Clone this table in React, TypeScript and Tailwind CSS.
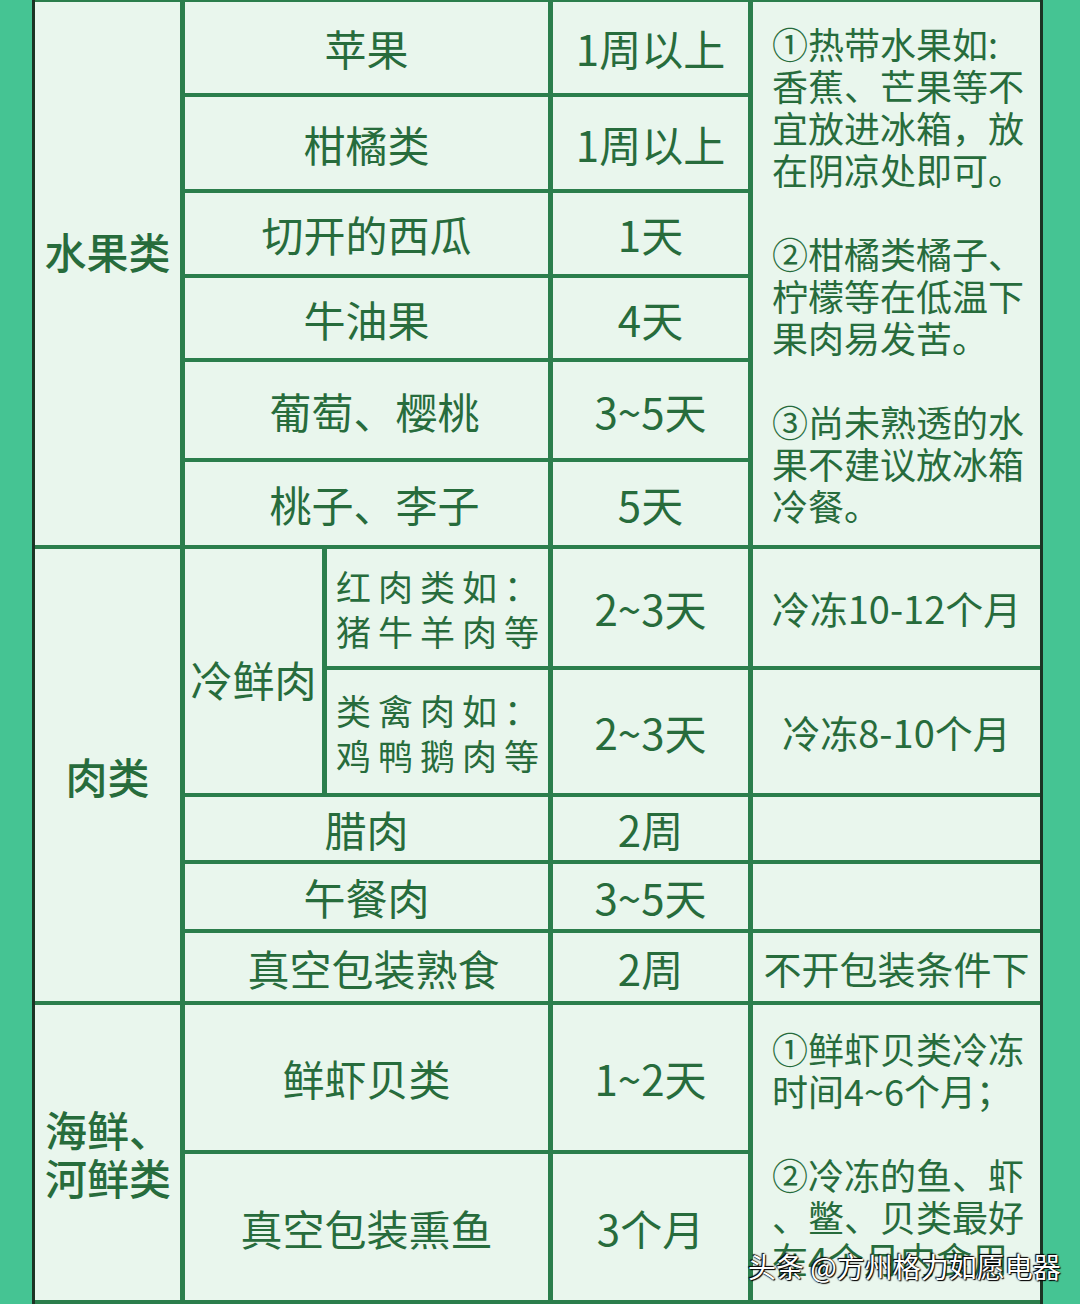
import React from "react";

const base =
  "bg-[#e9f6ed] flex items-center justify-center text-[#276c3c] font-['Noto_Sans_CJK_SC','Noto_Sans',sans-serif]";

function Cell({ className = "", children }: { className?: string; children?: React.ReactNode }) {
  return <div className={base + " " + className}>{children}</div>;
}

export default function App() {
  return (
    <div className="relative w-[1080px] h-[1304px] bg-[#45c493] overflow-hidden pl-[32px]">
      <div className="w-[1011px] border-x-[3px] border-[#1c3324] bg-[#2b7e4c] pt-[2px] pb-[4px]">
        <div className="grid grid-cols-[145px_137px_221px_195px_287px] grid-rows-[91px_92px_81px_80px_96px_83px_117px_123px_63px_65px_68px_145px_146px] gap-x-[5px] gap-y-[4px]">
          {/* Fruit section */}
          <Cell className="col-start-1 row-start-1 row-span-6 text-[42px] font-medium pb-[46px]">水果类</Cell>
          <Cell className="col-start-2 col-span-2 row-start-1 text-[42px]">苹果</Cell>
          <Cell className="col-start-4 row-start-1 text-[42px]">1周以上</Cell>
          <Cell className="col-start-5 row-start-1 row-span-6 !justify-start pl-[19px] text-[36px] leading-[42px]">
            <div>
              ①热带水果如:
              <br />
              香蕉、芒果等不
              <br />
              宜放进冰箱，放
              <br />
              在阴凉处即可。
              <br />
              <br />
              ②柑橘类橘子、
              <br />
              柠檬等在低温下
              <br />
              果肉易发苦。
              <br />
              <br />
              ③尚未熟透的水
              <br />
              果不建议放冰箱
              <br />
              冷餐。
            </div>
          </Cell>
          <Cell className="col-start-2 col-span-2 row-start-2 text-[42px]">柑橘类</Cell>
          <Cell className="col-start-4 row-start-2 text-[42px]">1周以上</Cell>
          <Cell className="col-start-2 col-span-2 row-start-3 text-[42px]">切开的西瓜</Cell>
          <Cell className="col-start-4 row-start-3 text-[42px]">1天</Cell>
          <Cell className="col-start-2 col-span-2 row-start-4 text-[42px]">牛油果</Cell>
          <Cell className="col-start-4 row-start-4 text-[42px]">4天</Cell>
          <Cell className="col-start-2 col-span-2 row-start-5 text-[42px] pl-[16px]">葡萄、樱桃</Cell>
          <Cell className="col-start-4 row-start-5 text-[42px]">3~5天</Cell>
          <Cell className="col-start-2 col-span-2 row-start-6 text-[42px] pl-[16px]">桃子、李子</Cell>
          <Cell className="col-start-4 row-start-6 text-[42px]">5天</Cell>

          {/* Meat section */}
          <Cell className="col-start-1 row-start-7 row-span-5 text-[42px] font-medium">肉类</Cell>
          <Cell className="col-start-2 row-start-7 row-span-2 text-[42px] pt-[14px]">冷鲜肉</Cell>
          <Cell className="col-start-3 row-start-7 !justify-start pl-[9px] text-[35px] leading-[45px] tracking-[7px]">
            <div>
              红肉类如：
              <br />
              猪牛羊肉等
            </div>
          </Cell>
          <Cell className="col-start-4 row-start-7 text-[42px]">2~3天</Cell>
          <Cell className="col-start-5 row-start-7 text-[38px]">冷冻10-12个月</Cell>
          <Cell className="col-start-3 row-start-8 !justify-start pl-[9px] text-[35px] leading-[45px] tracking-[7px]">
            <div>
              类禽肉如：
              <br />
              鸡鸭鹅肉等
            </div>
          </Cell>
          <Cell className="col-start-4 row-start-8 text-[42px]">2~3天</Cell>
          <Cell className="col-start-5 row-start-8 text-[38px]">冷冻8-10个月</Cell>
          <Cell className="col-start-2 col-span-2 row-start-9 text-[42px]">腊肉</Cell>
          <Cell className="col-start-4 row-start-9 text-[42px]">2周</Cell>
          <Cell className="col-start-5 row-start-9" />
          <Cell className="col-start-2 col-span-2 row-start-10 text-[42px]">午餐肉</Cell>
          <Cell className="col-start-4 row-start-10 text-[42px]">3~5天</Cell>
          <Cell className="col-start-5 row-start-10" />
          <Cell className="col-start-2 col-span-2 row-start-11 text-[42px] pl-[14px]">真空包装熟食</Cell>
          <Cell className="col-start-4 row-start-11 text-[42px]">2周</Cell>
          <Cell className="col-start-5 row-start-11 text-[38px]">不开包装条件下</Cell>

          {/* Seafood section */}
          <Cell className="col-start-1 row-start-12 row-span-2 text-[42px] font-medium leading-[48px] !justify-start pl-[10px]">
            <div>
              海鲜、
              <br />
              河鲜类
            </div>
          </Cell>
          <Cell className="col-start-2 col-span-2 row-start-12 text-[42px]">鲜虾贝类</Cell>
          <Cell className="col-start-4 row-start-12 text-[42px]">1~2天</Cell>
          <Cell className="col-start-5 row-start-12 row-span-2 !justify-start pl-[19px] text-[36px] leading-[42px]">
            <div>
              ①鲜虾贝类冷冻
              <br />
              时间4~6个月；
              <br />
              <br />
              ②冷冻的鱼、虾
              <br />
              、鳖、贝类最好
              <br />
              在4个月内食用
            </div>
          </Cell>
          <Cell className="col-start-2 col-span-2 row-start-13 text-[42px]">真空包装熏鱼</Cell>
          <Cell className="col-start-4 row-start-13 text-[42px]">3个月</Cell>
        </div>
      </div>

      <div className="absolute left-[748px] top-[1248px] text-[28px] leading-[36px] text-white font-['Noto_Sans_CJK_SC','Noto_Sans',sans-serif] [text-shadow:0_0_2px_#000,1px_1px_1px_#000,-1px_-1px_1px_#000]">
        头条 @方州格力如愿电器
      </div>
    </div>
  );
}
